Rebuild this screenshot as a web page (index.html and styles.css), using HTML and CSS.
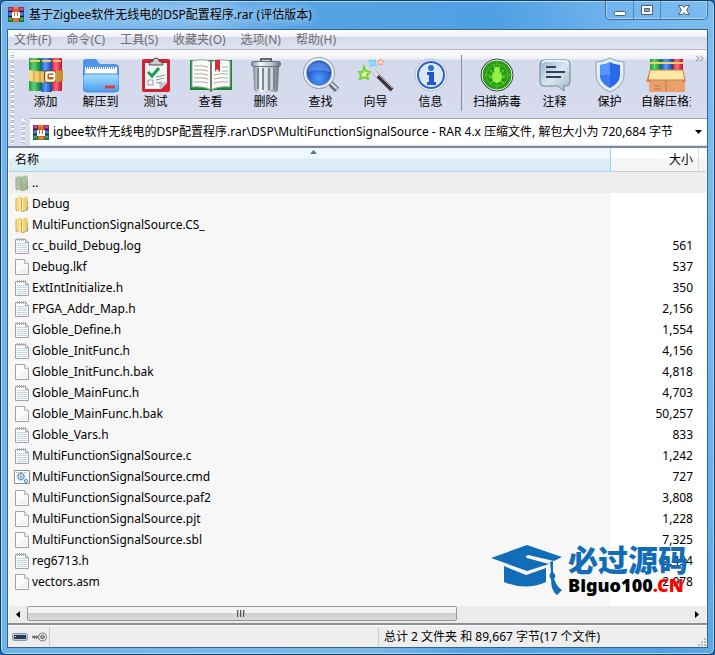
FILE: index.html
```html
<!DOCTYPE html>
<html lang="zh-CN">
<head>
<meta charset="utf-8">
<title>基于Zigbee软件无线电的DSP配置程序.rar (评估版本)</title>
<link rel="stylesheet" href="styles.css">
</head>
<body>
<svg class="defs" aria-hidden="true">
  <defs>
    <linearGradient id="gold" x1="0" x2="1"><stop offset="0" stop-color="#f9e08a"/><stop offset=".5" stop-color="#f0b84e"/><stop offset="1" stop-color="#c8862a"/></linearGradient>
    <linearGradient id="green" x1="0" x2="1"><stop offset="0" stop-color="#169b3b"/><stop offset=".4" stop-color="#5fd37c"/><stop offset="1" stop-color="#0b7a2b"/></linearGradient>
    <linearGradient id="blue" x1="0" x2="1"><stop offset="0" stop-color="#1750c8"/><stop offset=".4" stop-color="#5c9bff"/><stop offset="1" stop-color="#1440a8"/></linearGradient>
    <linearGradient id="red" x1="0" x2="1"><stop offset="0" stop-color="#d81b3c"/><stop offset=".4" stop-color="#ff6b84"/><stop offset="1" stop-color="#b80f2c"/></linearGradient>
    <linearGradient id="sky" x1="0" y1="0" x2="0" y2="1"><stop offset="0" stop-color="#a8e0ff"/><stop offset="1" stop-color="#4a9cf0"/></linearGradient>
    <linearGradient id="steel" x1="0" x2="1"><stop offset="0" stop-color="#7e8894"/><stop offset=".3" stop-color="#f4f7fa"/><stop offset=".7" stop-color="#b6c0ca"/><stop offset="1" stop-color="#667280"/></linearGradient>
    <linearGradient id="bubble" x1="0" y1="0" x2="1" y2="1"><stop offset="0" stop-color="#8fb4d4"/><stop offset=".5" stop-color="#dbe6ef"/><stop offset="1" stop-color="#9fb4c8"/></linearGradient>
    <linearGradient id="leaf" x1="0" x2="1"><stop offset="0" stop-color="#fbe9a6"/><stop offset="1" stop-color="#eec25a"/></linearGradient>
    <radialGradient id="lens" cx=".5" cy=".7"><stop offset="0" stop-color="#4f9cf8"/><stop offset="1" stop-color="#1c50c8"/></radialGradient>
    <symbol id="books" viewBox="0 0 34 34">
      <rect x="0" y="0" width="12" height="33" rx="1" fill="url(#green)"/><rect x="12" y="0" width="11" height="34" rx="1" fill="url(#blue)"/><rect x="23" y="0" width="10" height="33" rx="1" fill="url(#red)"/>
      <path d="M1 3h10M13 3h9M24 3h8" stroke="#f2cf54" stroke-width="2"/>
      <path d="M0 12q17 3 34 0v11q-17 3-34 0z" fill="url(#gold)"/>
      <path d="M5 13v11M11 14v10M29 13v10" stroke="#c88a3a"/>
      <rect x="15.500" y="12.500" width="11" height="12" rx="2" fill="none" stroke="#6b4b27"/><rect x="17.500" y="14.500" width="8" height="8" rx="1" fill="#b8691e" stroke="#fff" stroke-width="2"/><path d="M20 18h5" stroke="#fff" stroke-width="2"/>
    </symbol>
    <symbol id="rar" viewBox="0 0 16 15">
      <path fill="#b01a6a" d="M0 0h16v5H0z"/><path fill="#2557b8" d="M0 5h16v5H0z"/><path fill="#14823a" d="M0 10h16v5H0z"/>
      <path d="M0 4.500h16M0 9.500h16" stroke="#2a2340"/><path d="M1 2h3M12 2h3M1 7h3M12 7h3M1 12h3M12 12h3" stroke="#c69ab8"/>
      <path fill="#d9632a" d="M5 0h6v15H5z"/><path d="M5 5v5h6V5M8 5v4" fill="none" stroke="#fff" stroke-width="2"/><path d="M6 1h4M6 13h4" stroke="#f0a060"/>
    </symbol>
    <symbol id="folder" viewBox="0 0 14 16">
      <path d="M1 2l5-1.500V14l-3 1-2-1z" fill="url(#leaf)"/><path d="M4 3l7-2.500 1.500 1V5l.5.500V14l-7 2-2-2z" fill="url(#leaf)"/><path d="M6.500 2.500V15" stroke="#dfa537"/><path d="M7.500 3.500V15" stroke="#fdf0b8"/><path d="M1 2v12l2 1M12.500 5v9l-6 2" fill="none" stroke="#d9a441"/><path d="M12.500 11v3" stroke="#4b9ae0" stroke-width="1"/>
    </symbol>
    <symbol id="up" viewBox="0 0 14 16">
      <path d="M1 2l5-1.500V14l-3 1-2-1z" fill="#a9c8a8"/><path d="M4 3l7-2.500 1.500 1V5l.5.500V14l-7 2-2-2z" fill="#b3b28c"/><path d="M5 2l6-1.500 1.500 1V8L5 9z" fill="#a4c4a4"/><path d="M6.500 3V15" stroke="#97a884"/><path d="M1 2v12l2 1M12.500 5v9l-6 2" fill="none" stroke="#93a98f"/><path d="M12.500 11v3" stroke="#4b9ae0"/>
    </symbol>
    <symbol id="blank" viewBox="0 0 14 16"><path d="M.5.5h9l4 4v11H.5z" fill="#fbfbfb" stroke="#a2a2a2"/><path d="M9.500.5v4h4" fill="#eee" stroke="#b5b5b5"/><path d="M2 13L12 7v7H2z" fill="#f1f1f1"/></symbol>
    <symbol id="note" viewBox="0 0 14 16"><path d="M.5 1.500h10l3 3v11H.5z" fill="#fafcfd" stroke="#a2a2a2"/><path d="M2 5.500h10M2 7.500h10M2 9.500h10M2 11.500h10M2 13.500h10" stroke="#c3d6e2"/><path d="M2.500 0v3M4.500 0v3M6.500 0v3M8.500 0v3M10.500 0v3" stroke="#b0b0b0"/><path d="M10.500 1.500v3h3" fill="none" stroke="#aaa"/></symbol>
    <symbol id="cmd" viewBox="0 0 16 14"><path d="M.5.5h15v13H.5z" fill="#fff" stroke="#8d8d9a"/><path d="M2 2.500h12" stroke="#9ab" stroke-dasharray="1 1"/><circle cx="7" cy="6.500" r="4" fill="none" stroke="#7fa5cc" stroke-dasharray="1 1"/><circle cx="7" cy="6.500" r="3" fill="#dcecf8" stroke="#4d7fb4"/><circle cx="7" cy="6.500" r="1" fill="#4d7fb4"/><circle cx="12" cy="11" r="1.500" fill="#fff" stroke="#3f76ae"/></symbol>
  </defs>
</svg>
<div class="window">
  <header class="titlebar">
    <svg class="rar"><use href="#rar"/></svg>
    <h1>基于Zigbee软件无线电的DSP配置程序.rar (评估版本)</h1>
    <div class="controls">
      <button aria-label="最小化"><svg width="14" height="14" viewBox="0 0 14 14"><rect x="1.500" y="8.500" width="11" height="4" rx="1" fill="#fff" stroke="#52606e"/></svg></button>
      <button aria-label="最大化"><svg width="14" height="14" viewBox="0 0 14 14"><path d="M1.500 2.500h11v9h-11zM4.500 5.500v3h5v-3z" fill="#fff" fill-rule="evenodd" stroke="#52606e"/></svg></button>
      <button class="close" aria-label="关闭"><svg width="14" height="14" viewBox="0 0 14 14"><path d="M1.500 2.500h4L7 4.500l1.500-2h4L9.500 7l3 4.500h-4L7 9.500l-1.500 2h-4l3-4.500z" fill="#fff" stroke="#52606e"/></svg></button>
    </div>
  </header>
  <main class="client">
    <nav class="menu"><button>文件(F)</button><button>命令(C)</button><button>工具(S)</button><button>收藏夹(O)</button><button>选项(N)</button><button>帮助(H)</button></nav>
    <div class="bars">
      <div class="grip"></div>
      <div class="stack">
        <div class="toolbar">
          <button><svg viewBox="0 0 34 34" width="34"><use href="#books"/></svg>添加</button>
          <button><svg viewBox="0 0 36 34" width="36"><path d="M0 31V4q0-3 3-3h10l4 5h15q4 0 4 4v21z" fill="#4d96ec"/><path d="M2 9h32v10H2z" fill="#fff"/><path d="M3 10h30" stroke="#7795b5" stroke-width="2" stroke-dasharray="1 1"/><path d="M0 18q0-2 3-2h30q3 0 3 2v12q0 4-4 4H4q-4 0-4-4z" fill="url(#sky)" stroke="#3d88df"/><path d="M22 29h10" stroke="#e3402c" stroke-width="3"/></svg>解压到</button>
          <button><svg viewBox="0 0 28 34" width="28"><rect y="1" width="28" height="33" rx="2" fill="#cf2333"/><path d="M3 5h22v20l-6 6H3z" fill="#f6f8f8"/><path d="M25 24l-7 7-1-6z" fill="#bbc3c7"/><path d="M7 7q0-3 4-4 0-3 3-3t3 3q4 1 4 4z" fill="#c9cdd2" stroke="#4b4b55"/><path d="M6 14l4 4 7-8" fill="none" stroke="#19a04a" stroke-width="3"/><path d="M14 19l9-2M14 22l8-2M14 25l6-1" stroke="#8d9499"/><path d="M6 22h5v5H6z" fill="none" stroke="#999"/></svg>测试</button>
          <button><svg viewBox="0 0 42 34" width="42"><path d="M0 2h42v30H23l-2 2-2-2H0z" fill="#16843a"/><path d="M2 3q13-3 19 1 7-4 19-1v26q-12-1-19 3-7-4-19-3z" fill="#fbfbf6" stroke="#a2a599"/><path d="M21 4v28" stroke="#777" stroke-width="2"/><path d="M4 8q8-1 14 1M4 12q8-1 14 1M4 16q8-1 14 1M4 20q8-1 14 1M4 24q8-1 14 1M24 17q7-2 14-1M24 21q7-2 14-1M24 25q7-2 14-1M32 9h6M32 13h6" fill="none" stroke="#aaa"/><path d="M25 2h5v12l-3-3-2 3z" fill="#d72836"/></svg>查看</button>
          <button><svg viewBox="0 0 30 34" width="30"><path d="M2 7h26l-1 24q0 3-3 3H6q-3 0-3-3z" fill="url(#steel)"/><path d="M7 10v21M12 10v22M18 10v22M23 10v21" stroke="#7c8791" stroke-width="2"/><path d="M9 10v21M15 10v22M21 10v21" stroke="#eff3f5"/><path d="M10 4V1h10v3" fill="none" stroke="#5f6975" stroke-width="2"/><rect x=".5" y="3.500" width="29" height="5" rx="2" fill="url(#steel)" stroke="#66717c"/></svg>删除</button>
          <button><svg viewBox="0 0 36 36" width="36"><path d="M25 24l9 9" stroke="#666f78" stroke-width="6"/><path d="M26 24l8 8" stroke="#dde2e6" stroke-width="2"/><circle cx="16" cy="16" r="14" fill="url(#lens)" stroke="#8ea0b0" stroke-width="4"/><circle cx="16" cy="16" r="14" fill="none" stroke="#edf4fa" stroke-width="2"/><path d="M5 15q0-9 11-10 10 1 11 10-11-4-22 0z" fill="#90c5ff" opacity=".4"/></svg>查找</button>
          <button><svg viewBox="0 0 36 34" width="36"><path d="M16 14l18 18" stroke="#3b343b" stroke-width="4"/><path d="M17 13l17 17" stroke="#aaa5aa" stroke-width="1"/><path d="M15 13l5 5" stroke="#ddd" stroke-width="4"/><path d="M6 9l2 4 4 1-3 3 1 4-4-2-4 2 1-4-2-3h4z" fill="#e5ffc6" stroke="#76d52a" stroke-width="2"/><path d="M13 1l2 2 3-1-1 3 2 3-4-1-3 2V5l-2-2h3z" fill="#8edcff" stroke="#7cc9f2"/><path d="M23 1l1 2h2l-2 2 1 2-2-1-2 1v-2l-1-2h2z" fill="#ffe6cd" stroke="#f0a078"/></svg>向导</button>
          <button><svg viewBox="0 0 34 34" width="34"><circle cx="17" cy="17" r="16" fill="#edf1f7" stroke="#b3bdcc"/><circle cx="17" cy="17" r="13" fill="#dde8f6" stroke="#2d62c5" stroke-width="2"/><circle cx="17" cy="10" r="3" fill="#286ed0"/><path d="M13 14h7v10h2v3h-9v-3h2v-7h-2z" fill="#2158d0"/></svg>信息</button>
          <span class="separator"></span>
          <button class="wide"><svg viewBox="0 0 34 34" width="34"><circle cx="17" cy="17" r="16" fill="#279b18" stroke="#394435"/><circle cx="17" cy="17" r="15" fill="none" stroke="#eee"/><circle cx="17" cy="17" r="11" fill="none" stroke="#55bb30"/><path d="M17 3v28M3 17h28" stroke="#55bb30"/><ellipse cx="17" cy="19" rx="5" ry="6" fill="#92f341"/><circle cx="17" cy="12" r="3" fill="#92f341"/><path d="M10 12l4 4M24 12l-4 4M9 19h16M10 26l4-4M24 26l-4-4M14 8l2 3M20 8l-2 3" stroke="#92f341" stroke-width="1"/></svg>扫描病毒</button>
          <button><svg viewBox="0 0 32 34" width="32"><path d="M5 2h22q4 0 4 4v18q0 4-4 4h-2v5l-6-5H5q-4 0-4-4V6q0-4 4-4z" fill="url(#bubble)" stroke="#71869b"/><path d="M3 5q1-2 4-2h19q3 0 3 3" fill="none" stroke="#e6f2fb" stroke-width="2"/><path d="M7 9h10M7 14h19M7 19h15" stroke="#354052" stroke-width="2"/></svg>注释</button>
          <button><svg viewBox="0 0 30 36" width="30"><path d="M15 1q7 4 14 4v13q0 11-14 17Q1 29 1 18V5q7 0 14-4z" fill="#e6edf4" stroke="#83a0b6"/><path d="M15 5q5 3 10 3v10q0 8-10 13Q5 26 5 18V8q5 0 10-3z" fill="#2868eb"/><path d="M15 5v13H5V8q5 0 10-3z" fill="#5498ff"/><path d="M15 18v13Q5 26 5 18z" fill="#3b7af5"/></svg>保护</button>
          <button class="cut"><svg viewBox="0 0 40 34" width="40"><rect x="4" y="1" width="11" height="14" fill="url(#green)"/><rect x="15" y="1" width="12" height="14" fill="url(#blue)"/><rect x="27" y="1" width="10" height="14" fill="url(#red)"/><path d="M4 5h33" stroke="#f3d35c" stroke-width="2"/><path d="M3 21h36v13H3z" fill="#eaa06c"/><path d="M4 12L0 24h5zM36 12l4 12h-4z" fill="#d8894f"/><path d="M4 12h33l2 10H2z" fill="#ffe7a6" stroke="#c9823e"/><path d="M20 23v11M8 28h7M8 31h7" stroke="#c6733f"/></svg><span>自解压格式</span></button>
          <svg class="more" width="9" height="7" viewBox="0 0 9 7"><path d="M1 .5l3 3-3 3M5 .5l3 3-3 3" fill="none" stroke="#667590"/></svg>
        </div>
        <div class="address">
          <div class="grip"></div>
          <div class="field">
            <svg class="rar"><use href="#rar"/></svg>
            <select aria-label="路径"><option>igbee软件无线电的DSP配置程序.rar\DSP\MultiFunctionSignalSource - RAR 4.x 压缩文件, 解包大小为 720,684 字节</option></select>
            <svg class="arrow" width="7" height="4" viewBox="0 0 7 4"><path d="M0 0h7L3.500 4z"/></svg>
          </div>
        </div>
      </div>
    </div>
    <section class="list">
      <table>
        <colgroup><col><col class="col-size"><col class="col-end"></colgroup>
        <thead><tr><th class="sorted">名称<svg width="7" height="4" viewBox="0 0 7 4"><path d="M0 4h7L3.500 0z" fill="#4c7b98"/></svg></th><th>大小</th><th></th></tr></thead>
        <tbody>
          <tr class="current"><td><svg><use href="#up"/></svg>..</td><td></td><td></td></tr>
          <tr><td><svg><use href="#folder"/></svg>Debug</td><td></td><td></td></tr>
          <tr><td><svg><use href="#folder"/></svg>MultiFunctionSignalSource.CS_</td><td></td><td></td></tr>
          <tr><td><svg><use href="#note"/></svg>cc_build_Debug.log</td><td>561</td><td></td></tr>
          <tr><td><svg><use href="#blank"/></svg>Debug.lkf</td><td>537</td><td></td></tr>
          <tr><td><svg><use href="#note"/></svg>ExtIntInitialize.h</td><td>350</td><td></td></tr>
          <tr><td><svg><use href="#note"/></svg>FPGA_Addr_Map.h</td><td>2,156</td><td></td></tr>
          <tr><td><svg><use href="#note"/></svg>Globle_Define.h</td><td>1,554</td><td></td></tr>
          <tr><td><svg><use href="#note"/></svg>Globle_InitFunc.h</td><td>4,156</td><td></td></tr>
          <tr><td><svg><use href="#blank"/></svg>Globle_InitFunc.h.bak</td><td>4,818</td><td></td></tr>
          <tr><td><svg><use href="#note"/></svg>Globle_MainFunc.h</td><td>4,703</td><td></td></tr>
          <tr><td><svg><use href="#blank"/></svg>Globle_MainFunc.h.bak</td><td>50,257</td><td></td></tr>
          <tr><td><svg><use href="#note"/></svg>Globle_Vars.h</td><td>833</td><td></td></tr>
          <tr><td><svg><use href="#note"/></svg>MultiFunctionSignalSource.c</td><td>1,242</td><td></td></tr>
          <tr><td><svg><use href="#cmd"/></svg>MultiFunctionSignalSource.cmd</td><td>727</td><td></td></tr>
          <tr><td><svg><use href="#blank"/></svg>MultiFunctionSignalSource.paf2</td><td>3,808</td><td></td></tr>
          <tr><td><svg><use href="#blank"/></svg>MultiFunctionSignalSource.pjt</td><td>1,228</td><td></td></tr>
          <tr><td><svg><use href="#blank"/></svg>MultiFunctionSignalSource.sbl</td><td>7,325</td><td></td></tr>
          <tr><td><svg><use href="#note"/></svg>reg6713.h</td><td>2,494</td><td></td></tr>
          <tr><td><svg><use href="#blank"/></svg>vectors.asm</td><td>2,978</td><td></td></tr>
        </tbody>
      </table>
      <div class="filler"><span></span></div>
      <div class="scrollbar">
        <button aria-label="向左滚动"><svg width="4" height="7" viewBox="0 0 4 7"><path d="M4 0v7L0 3.500z"/></svg></button>
        <div class="track"><div class="thumb"><svg width="9" height="7" viewBox="0 0 9 7"><path d="M.5 0v7M3.500 0v7M6.500 0v7" stroke="#555"/><path d="M1.500 0v7M4.500 0v7M7.500 0v7" stroke="#bbb"/></svg></div></div>
        <button aria-label="向右滚动"><svg width="4" height="7" viewBox="0 0 4 7"><path d="M0 0v7l4-3.500z"/></svg></button>
      </div>
      <div class="watermark">
        <svg width="72" height="52" viewBox="0 0 72 52"><g fill="#126db8"><path d="M0 14L36 1l35 12-8 4-26-6q-4 1-1 3l22 6-22 7z"/><path d="M13 22l22 9 20-7v14q-20 9-42 0z"/><path d="M59 18l3-1v11q4 4 1 7 3 8 8 11l-5 5q-6-4-6-16-3-3 0-7z"/></g></svg>
        <div><strong>必过源码</strong><b>Biguo100<i>.CN</i></b></div>
      </div>
    </section>
    <footer class="status">
      <div class="icons">
        <svg width="16" height="8" viewBox="0 0 16 8"><rect x=".5" y=".5" width="15" height="7" rx="2" fill="#b8c9e8" stroke="#8192b3"/><path d="M2 2h12v4H2z" fill="#34394d"/><path d="M3 3h1v1H3z" fill="#fff"/></svg>
        <svg width="17" height="10" viewBox="0 0 17 10"><path d="M1 3h8v4H7V6H6v1H5V6H4v1H3V6H1z" fill="#777"/><path d="M1 3.500h8" stroke="#ccc"/><circle cx="11.500" cy="5" r="4" fill="#fff" stroke="#777"/><circle cx="11.500" cy="5" r="2" fill="#999" stroke="#777"/></svg>
      </div>
      <div class="total"><span>总计 2 文件夹 和 89,667 字节(17 个文件)</span><svg class="resize" width="9" height="9" viewBox="0 0 9 9"><path d="M7 1h2v2H7zM4 4h2v2H4zM7 4h2v2H7zM1 7h2v2H1zM4 7h2v2H4zM7 7h2v2H7z" fill="#bbb"/></svg></div>
    </footer>
  </main>
</div>
</body>
</html>
```
FILE: styles.css
```css
* { box-sizing: border-box; }
body {
  margin: 0;
  height: 100vh;
  background: #2461a8;
  color: #000;
  font: 12px/16px "Noto Sans", "Noto Sans CJK SC", sans-serif;
}
button, select { margin: 0; padding: 0; border: 0; background: none; color: inherit; font: inherit; }
svg { flex: none; }
.defs { position: absolute; width: 0; height: 0; }
.rar { width: 16px; height: 15px; }

.window {
  display: flex;
  flex-direction: column;
  min-height: 100vh;
  padding: 0 6px 6px;
  border: 1px solid #173d61;
  border-radius: 6px;
  background: linear-gradient(75deg, #6fb4ea 0, #7cb8ec 42%, #55a3e4 52%, #4fa0e3 75%, #74b6ee 90%, #7cbcf0);
  box-shadow: inset 0 0 0 1px #a9d7f6;
}
.titlebar { display: flex; height: 28px; }
.titlebar .rar { margin: 6px 5px 0 1px; }
h1 {
  flex: 1;
  min-width: 0;
  margin: 0;
  padding-top: 5px;
  overflow: hidden;
  font-size: 12px;
  font-weight: 400;
  line-height: 18px;
  text-shadow: 0 0 8px #c5e1f8, 0 0 12px #b9dbf6;
  white-space: nowrap;
}
.controls {
  display: flex;
  height: 19px;
  border: 1px solid #3c6c9a;
  border-top: 0;
  border-radius: 0 0 5px 5px;
  box-shadow: inset 0 0 0 1px #a9d5f5;
}
.controls button { display: grid; place-items: center; width: 27px; }
.controls button + button { border-left: 1px solid #5789b7; }
.controls .close { width: 47px; }

.client {
  display: flex;
  flex: 1;
  flex-direction: column;
  border: 1px solid #3b6288;
  background: #eee;
}
.menu {
  display: flex;
  gap: 15px;
  height: 20px;
  padding: 1px 0 0 6px;
  border-bottom: 1px solid #b2b8ce;
  background: linear-gradient(#fff 0, #f2f3f9 35%, #d5daec 36%, #dfe3f2);
  color: #6d6d6d;
}
.bars {
  display: flex;
  padding: 1px 0 1px 3px;
  border-bottom: 2px solid #7f8798;
  background: linear-gradient(#fff 0, #eff0f5 9px, #d5d9ec 10px, #d8dcee);
}
.grip {
  width: 3px;
  margin: 1px 0;
  background:
    linear-gradient(#fff, #fff) 0 0 / 2px 2px no-repeat,
    repeating-linear-gradient(#b0b5c6 0 1px, #fff 1px 3px, #b0b5c6 3px 4px, transparent 4px 5px);
}
.stack { flex: 1; min-width: 0; }
.toolbar { display: flex; height: 67px; padding-left: 4px; overflow: hidden; }
.toolbar button {
  display: flex;
  flex: none;
  flex-direction: column;
  align-items: center;
  width: 55px;
  padding-top: 6px;
  white-space: nowrap;
}
.toolbar button svg { height: 36px; margin-bottom: 1px; }
.toolbar .wide { width: 60px; }
.separator { width: 1px; height: 56px; margin: 4px 5px 0 3px; background: #858da2; }
.toolbar .cut { width: 58px; }
.cut span { width: 50px; overflow: hidden; }
.more { margin: 4px 3px 0 auto; }
.address { display: flex; gap: 5px; height: 27px; padding-left: 8px; }
.field { position: relative; display: flex; flex: 1; align-items: center; min-width: 0; padding-left: 3px; border-top: 1px solid #9da4b8; background: #fff; }
.field select { flex: 1; min-width: 0; height: 24px; padding: 0 18px 0 4px; appearance: none; outline: 0; }
.arrow { position: absolute; right: 5px; }

.list { position: relative; display: flex; flex: 1; flex-direction: column; padding: 0 1px; background: #fff; border-bottom: 2px solid #8b8f9b; }
table { width: 100%; border-collapse: separate; border-spacing: 0; table-layout: fixed; }
.col-size { width: 88px; }
.col-end { width: 7px; }
th { position: relative; height: 24px; padding: 1px 5px 0 6px; border-right: 1px solid #ddd; border-bottom: 1px solid #ccc; background: linear-gradient(#fff 45%, #f5f5f5 46%); font-weight: 400; text-align: right; }
th:last-child { padding: 0; border-right: 0; }
.sorted { border-color: #96d9f9; background: linear-gradient(#f1f9fe 45%, #dcedf6 46%); text-align: left; }
.sorted svg { position: absolute; top: 2px; left: 50%; }
td { height: 21px; padding: 3px 6px 2px 5px; overflow: hidden; text-align: right; white-space: nowrap; }
td:first-child { background: #f7f7f7; text-align: left; }
td:last-child { padding: 0; }
td svg { width: 16px; height: 16px; margin-right: 2px; vertical-align: top; }
.current td, .current td:first-child { background: #eee; }
.filler { display: flex; flex: 1; padding-right: 95px; }
.filler span { flex: 1; background: #f7f7f7; }
.scrollbar { display: flex; height: 17px; background: #ececec; }
.scrollbar button { display: grid; place-items: center; width: 18px; }
.track { flex: 1; }
.thumb { display: grid; place-items: center; width: 65%; height: 15px; border: 1px solid #979797; border-radius: 2px; background: linear-gradient(#f4f4f4 45%, #d0d0d0 46%, #dcdcdc); }
.watermark { position: absolute; right: 19px; bottom: 27px; display: flex; gap: 5px; }
.watermark div { width: 120px; }
.watermark strong { display: block; color: #126db8; font-size: 30px; font-weight: 900; line-height: 32px; white-space: nowrap; }
.watermark b { display: block; font-size: 18px; font-weight: 900; line-height: 18px; }
.watermark i { color: #f00; font-style: normal; }

.status { display: flex; height: 22px; padding: 1px; border-top: 1px solid #fff; }
.icons { display: flex; gap: 3px; align-items: center; width: 41px; padding-left: 3px; border-right: 1px solid #ccc; }
.total { display: flex; justify-content: space-between; width: 328px; margin-left: auto; padding-left: 5px; border-left: 1px solid #ccc; line-height: 19px; }
.resize { align-self: flex-end; }
```
